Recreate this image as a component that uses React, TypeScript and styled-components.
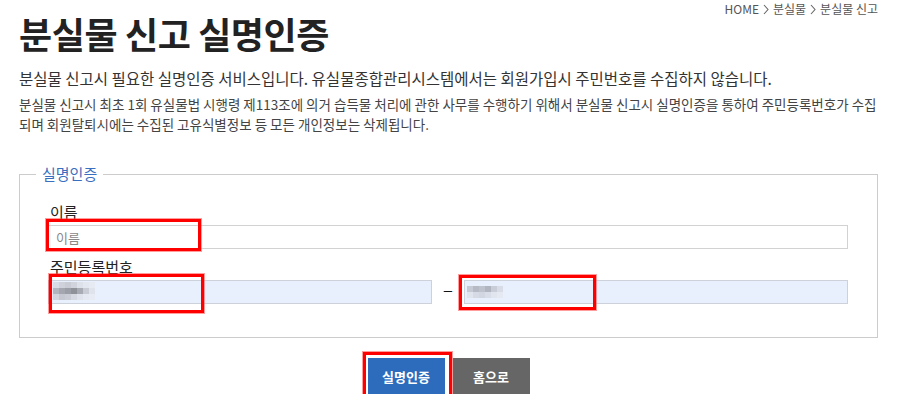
import React from "react";
import styled, { createGlobalStyle } from "styled-components";

const GlobalStyle = createGlobalStyle`
  body {
    margin: 0;
    background: #fff;
    font-family: "Noto Sans CJK KR", "Noto Sans", sans-serif;
    color: #333;
  }
`;

const Page = styled.div`
  width: 897px;
  box-sizing: border-box;
  padding: 0 19px;
`;

const Header = styled.div`
  display: flex;
  justify-content: space-between;
  align-items: flex-start;
`;

const Title = styled.h1`
  margin: 0;
  padding-top: 11px;
  font-size: 36px;
  line-height: 44px;
  font-weight: 700;
  color: #222;
  letter-spacing: -0.4px;
`;

const Breadcrumb = styled.div`
  display: flex;
  align-items: center;
  gap: 4px;
  padding-top: 1px;
  font-size: 12px;
  line-height: 16px;
  color: #555;
`;

const Chevron = () => (
  <svg width="6" height="11" viewBox="0 0 6 11">
    <path d="M1 1 L5 5.5 L1 10" fill="none" stroke="#666" strokeWidth="1.1" />
  </svg>
);

const Lead = styled.p`
  margin: 12px 0 0;
  font-size: 15.5px;
  line-height: 22px;
  color: #333;
`;

const Note = styled.p`
  margin: 5px 0 0;
  font-size: 13.5px;
  line-height: 20px;
  color: #444;
`;

const Box = styled.fieldset`
  margin: 31px 0 0;
  padding: 0 16px 33px;
  border: 1px solid #ccc;
`;

const Legend = styled.legend`
  padding: 0 6px;
  font-size: 15px;
  line-height: 18px;
  color: #3a6fc0;
`;

const Body = styled.div`
  padding: 19px 13px 0 12px;
  display: flex;
  flex-direction: column;
  gap: 8px;
`;

const Field = styled.div`
  display: flex;
  flex-direction: column;
`;

const Label = styled.label`
  padding-left: 2px;
  margin-bottom: 3px;
  font-size: 15px;
  line-height: 20px;
  color: #222;
`;

const Mark = styled.div<{ $top: number; $left: number; $w: number; $h: number }>`
  position: absolute;
  top: ${(p) => p.$top}px;
  left: ${(p) => p.$left}px;
  width: ${(p) => p.$w}px;
  height: ${(p) => p.$h}px;
  box-sizing: border-box;
  border: 3px solid #f00;
  box-shadow: 0 0 0 1px rgba(255, 60, 60, 0.5);
  pointer-events: none;
`;

const Slot = styled.div`
  position: relative;
  display: flex;
  flex: 1;
`;

const TextInput = styled.input<{ $filled?: boolean }>`
  flex: 1;
  width: 100%;
  height: 24px;
  box-sizing: border-box;
  margin: 0;
  padding: 0 7px;
  border: 1px solid ${(p) => (p.$filled ? "#cdd1d9" : "#d2d2d2")};
  background: ${(p) => (p.$filled ? "#e8f0fe" : "#fff")};
  font-family: inherit;
  font-size: 13px;
  color: #333;
  outline: none;
  &::placeholder {
    color: #888;
  }
`;

const Row = styled.div`
  display: flex;
  align-items: center;
`;

const Dash = styled.span`
  width: 32px;
  padding-bottom: 4px;
  text-align: center;
  font-family: "Liberation Sans", sans-serif;
  font-size: 15px;
  line-height: 20px;
  color: #111;
`;

const Mosaic = styled.svg<{ $top: number; $left: number }>`
  position: absolute;
  top: ${(p) => p.$top}px;
  left: ${(p) => p.$left}px;
`;

const Actions = styled.div`
  display: flex;
  justify-content: center;
  gap: 8px;
  margin-top: 20px;
`;

const ButtonWrap = styled.div`
  position: relative;
`;

const Button = styled.button<{ $tone: "primary" | "dark" }>`
  width: 77px;
  height: 36px;
  border: 0;
  margin: 0;
  padding: 0;
  background: ${(p) => (p.$tone === "primary" ? "#2d6bbd" : "#666")};
  color: #fff;
  font-family: inherit;
  font-size: 13px;
  font-weight: 700;
  cursor: pointer;
`;

const firstBlur = [
  ["#d9dce4", "#cfd2db", "#c9ccd5", "#d1d4dd", "#dde1e9", "#e3e7ef", "#e6eaf2"],
  ["#b3b6be", "#a4a7af", "#9b9ea6", "#8f9299", "#a8abb3", "#c9ccd4", "#dfe3eb"],
  ["#d2d5de", "#c5c8d1", "#cacdd6", "#d6d9e2", "#dfe3eb", "#e5e9f1", "#e7ebf3"],
];

const secondBlur = [
  ["#c6cad4", "#b6bac5", "#bec2cc", "#b1b5c0", "#c9cdd7", "#d8dce6"],
  ["#e0e4ed", "#d6dae4", "#d2d6e0", "#d9dde7", "#e1e5ee", "#e5e9f2"],
];

const BlurBlock: React.FC<{ cells: string[][]; size: number; top: number; left: number }> = ({ cells, size, top, left }) => (
  <Mosaic
    $top={top}
    $left={left}
    width={cells[0].length * size}
    height={cells.length * size}
  >
    {cells.map((row, y) =>
      row.map((c, x) => (
        <rect key={`${x}-${y}`} x={x * size} y={y * size} width={size} height={size} fill={c} />
      ))
    )}
  </Mosaic>
);

const App: React.FC = () => {
  return (
    <Page>
      <GlobalStyle />
      <Header>
        <Title>분실물 신고 실명인증</Title>
        <Breadcrumb>
          <span>HOME</span>
          <Chevron />
          <span>분실물</span>
          <Chevron />
          <span>분실물 신고</span>
        </Breadcrumb>
      </Header>

      <Lead>
        분실물 신고시 필요한 실명인증 서비스입니다. 유실물종합관리시스템에서는 회원가입시 주민번호를 수집하지 않습니다.
      </Lead>
      <Note>
        분실물 신고시 최초 1회 유실물법 시행령 제113조에 의거 습득물 처리에 관한 사무를 수행하기 위해서 분실물 신고시 실명인증을 통하여 주민등록번호가 수집
        <br />
        되며 회원탈퇴시에는 수집된 고유식별정보 등 모든 개인정보는 삭제됩니다.
      </Note>

      <Box>
        <Legend>실명인증</Legend>
        <Body>
          <Field>
            <Label htmlFor="name">이름</Label>
            <Slot>
              <TextInput id="name" placeholder="이름" />
              <Mark $top={-6} $left={-2} $w={155} $h={32} />
            </Slot>
          </Field>
          <Field>
            <Label htmlFor="jumin1">주민등록번호</Label>
            <Row>
              <Slot>
                <TextInput id="jumin1" $filled readOnly />
                <BlurBlock cells={firstBlur} size={6} top={2} left={5} />
                <Mark $top={-6} $left={1} $w={155} $h={39} />
              </Slot>
              <Dash>–</Dash>
              <Slot>
                <TextInput id="jumin2" $filled readOnly />
                <BlurBlock cells={secondBlur} size={6} top={6} left={3} />
                <Mark $top={-5} $left={-5} $w={137} $h={35} />
              </Slot>
            </Row>
          </Field>
        </Body>
      </Box>

      <Actions>
        <ButtonWrap>
          <Button $tone="primary">실명인증</Button>
          <Mark $top={-6} $left={-5} $w={89} $h={47} />
        </ButtonWrap>
        <Button $tone="dark">홈으로</Button>
      </Actions>
    </Page>
  );
};

export default App;
